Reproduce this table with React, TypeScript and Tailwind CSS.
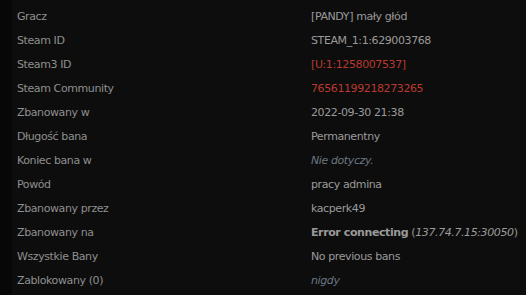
import React from "react";

type Row = { label: string; value: React.ReactNode };

const rows: Row[] = [
  { label: "Gracz", value: "[PANDY] mały głód" },
  { label: "Steam ID", value: "STEAM_1:1:629003768" },
  { label: "Steam3 ID", value: <span className="text-[#b93a2e]">[U:1:1258007537]</span> },
  { label: "Steam Community", value: <span className="text-[#b93a2e]">76561199218273265</span> },
  { label: "Zbanowany w", value: "2022-09-30 21:38" },
  { label: "Długość bana", value: "Permanentny" },
  { label: "Koniec bana w", value: <i className="text-[#6b7680]">Nie dotyczy.</i> },
  { label: "Powód", value: "pracy admina" },
  { label: "Zbanowany przez", value: "kacperk49" },
  {
    label: "Zbanowany na",
    value: (
      <span>
        <b>Error connecting</b> (<i>137.74.7.15:30050</i>)
      </span>
    ),
  },
  { label: "Wszystkie Bany", value: "No previous bans" },
  { label: "Zablokowany (0)", value: <i className="text-[#6b7680]">nigdy</i> },
];

export default function App() {
  return (
    <div
      className="w-[526px] h-[295px] bg-[#070707] flex overflow-hidden"
      style={{ fontFamily: '"DejaVu Sans", Verdana, sans-serif' }}
    >
      <div className="ml-[12px] flex-1 bg-[#0d0d0d] pt-[5px]">
        {rows.map((r) => (
          <div
            key={r.label}
            className="flex h-[24px] items-center text-[11px] tracking-[-0.4px] whitespace-nowrap"
          >
            <div className="w-[294px] shrink-0 pl-[5px] text-[#8f8f8f]">{r.label}</div>
            <div className="pl-[5px] text-[#9a9a9a]">{r.value}</div>
          </div>
        ))}
      </div>
    </div>
  );
}
